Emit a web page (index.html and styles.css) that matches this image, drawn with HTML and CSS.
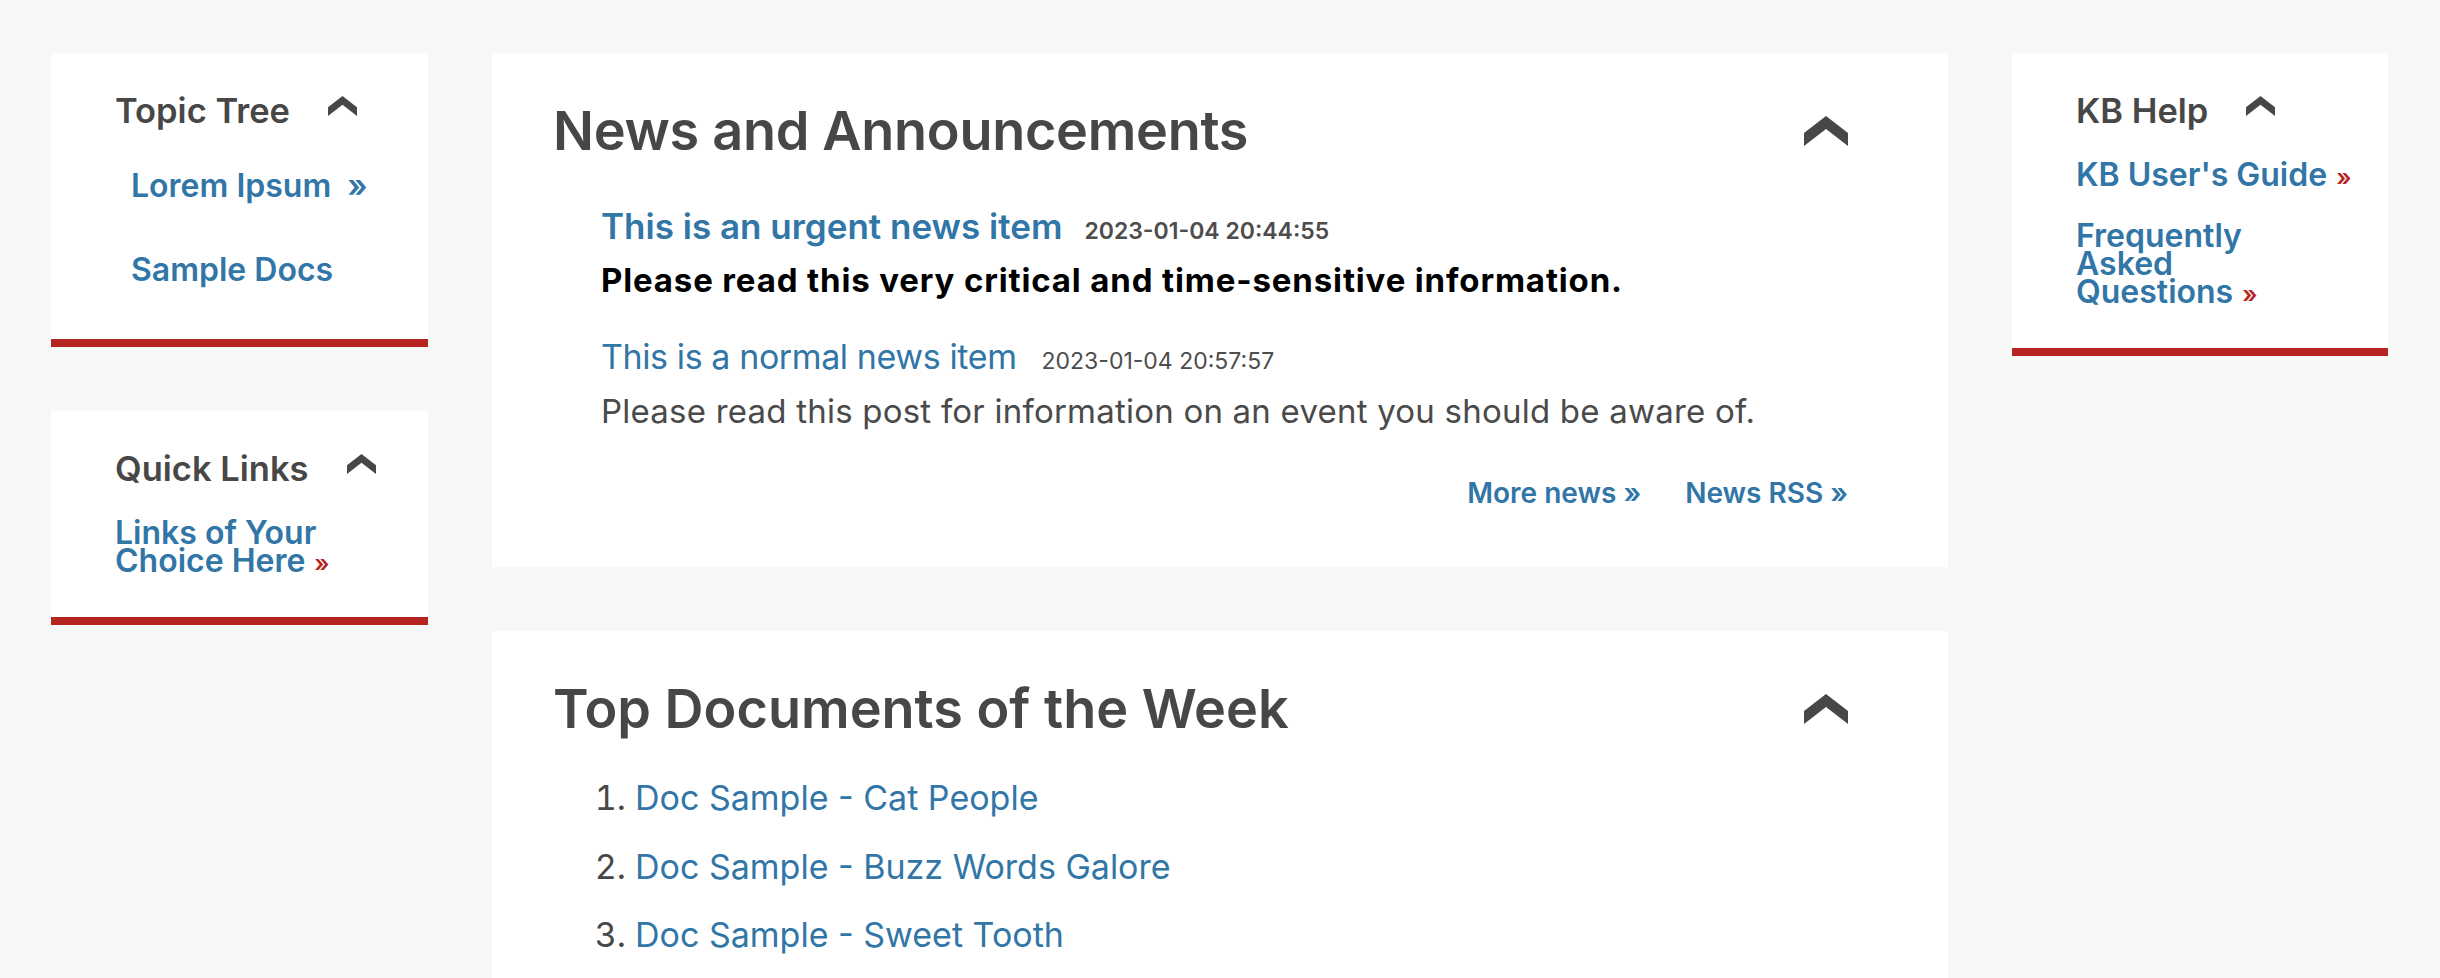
FILE: index.html
```html
<!DOCTYPE html>
<html lang="en">
<head>
<meta charset="utf-8">
<title>Knowledge Base</title>
<link rel="stylesheet" href="styles.css">
</head>
<body>
<div class="page">
  <aside class="col">
    <section class="side-card">
      <div class="side-head">
        <h2 class="side-title">Topic Tree</h2>
        <svg class="chev-sm" viewBox="0 0 44 30"><polygon points="22,0 44,17 44,30 22,13 0,30 0,17"/></svg>
      </div>
      <ul class="side-list tree">
        <li><a href="#">Lorem Ipsum</a><span class="arrow-blue">»</span></li>
        <li><a href="#">Sample Docs</a></li>
      </ul>
    </section>
    <section class="side-card">
      <div class="side-head">
        <h2 class="side-title">Quick Links</h2>
        <svg class="chev-sm" viewBox="0 0 44 30"><polygon points="22,0 44,17 44,30 22,13 0,30 0,17"/></svg>
      </div>
      <ul class="side-list">
        <li><a href="#">Links of Your Choice Here</a><span class="arrow-red">»</span></li>
      </ul>
    </section>
  </aside>

  <main class="col">
    <section class="main-card">
      <div class="main-head">
        <h1 class="main-title">News and Announcements</h1>
        <svg class="chev-lg" viewBox="0 0 44 30"><polygon points="22,0 44,17 44,30 22,13 0,30 0,17"/></svg>
      </div>
      <div class="news">
        <article class="news-item urgent">
          <div class="news-head">
            <a class="news-title" href="#">This is an urgent news item</a>
            <span class="news-date">2023-01-04 20:44:55</span>
          </div>
          <p class="news-body">Please read this very critical and time-sensitive information.</p>
        </article>
        <article class="news-item">
          <div class="news-head">
            <a class="news-title" href="#">This is a normal news item</a>
            <span class="news-date">2023-01-04 20:57:57</span>
          </div>
          <p class="news-body">Please read this post for information on an event you should be aware of.</p>
        </article>
      </div>
      <div class="news-more">
        <a href="#">More news »</a>
        <a href="#">News RSS »</a>
      </div>
    </section>

    <section class="main-card docs-card">
      <div class="main-head">
        <h1 class="main-title">Top Documents of the Week</h1>
        <svg class="chev-lg" viewBox="0 0 44 30"><polygon points="22,0 44,17 44,30 22,13 0,30 0,17"/></svg>
      </div>
      <ol class="docs">
        <li><a href="#">Doc Sample - Cat People</a></li>
        <li><a href="#">Doc Sample - Buzz Words Galore</a></li>
        <li><a href="#">Doc Sample - Sweet Tooth</a></li>
      </ol>
    </section>
  </main>

  <aside class="col">
    <section class="side-card kb-card">
      <div class="side-head">
        <h2 class="side-title">KB Help</h2>
        <svg class="chev-sm" viewBox="0 0 44 30"><polygon points="22,0 44,17 44,30 22,13 0,30 0,17"/></svg>
      </div>
      <ul class="side-list">
        <li class="single-line"><a href="#">KB User's Guide</a><span class="arrow-red">»</span></li>
        <li><a href="#">Frequently Asked Questions</a><span class="arrow-red">»</span></li>
      </ul>
    </section>
  </aside>
</div>
</body>
</html>
```

FILE: styles.css
```css
html, body {
  margin: 0;
  padding: 0;
}

body {
  background: #f7f7f7;
  font-family: Inter, "Noto Sans", "Liberation Sans", sans-serif;
  color: #474747;
}

a {
  color: #3176a7;
  text-decoration: none;
}

.page {
  display: grid;
  grid-template-columns: 377px 1456px 376px;
  column-gap: 64px;
  align-items: start;
  padding: 53px 52px 0 51px;
  height: 978px;
  box-sizing: border-box;
  overflow: hidden;
}

.col {
  display: flex;
  flex-direction: column;
  gap: 64px;
}

/* Sidebar cards */
.side-card {
  background: #fff;
  border-bottom: 8px solid #b5241f;
  padding: 38px 40px 41.6px 64px;
}

.kb-card {
  padding-right: 52px;
}

.side-head {
  display: flex;
  align-items: flex-start;
}

.side-title {
  margin: 0;
  font-size: 34.5px;
  line-height: 40px;
  font-weight: 600;
  color: #474747;
  white-space: nowrap;
}

.chev-sm {
  flex: none;
  width: 29px;
  height: 20px;
  margin: 5px 0 0 38px;
  fill: #474747;
}

.side-list {
  list-style: none;
  margin: 30.4px 0 0;
  padding: 0;
}

.side-list li {
  font-size: 32px;
  line-height: 28px;
  font-weight: 600;
}

.side-list li + li {
  margin-top: 33px;
}

.side-list .single-line {
  white-space: nowrap;
}

.tree {
  margin: 41.4px 0 13px;
  padding-left: 16px;
}

.tree li + li {
  margin-top: 56px;
}

.arrow-blue {
  color: #3176a7;
  margin-left: 16px;
}

.arrow-red {
  color: #b5241f;
  font-size: 24px;
  line-height: 0;
  font-weight: 600;
  margin-left: 9px;
  margin-right: -40px;
}

/* Main cards */
.main-card {
  background: #fff;
  padding: 46px 100px 57px 61px;
}

.main-head {
  display: flex;
  align-items: center;
  justify-content: space-between;
}

.main-title {
  margin: 0;
  font-size: 54px;
  line-height: 64px;
  font-weight: 600;
  letter-spacing: -0.3px;
  color: #474747;
}

.docs-card .main-title {
  letter-spacing: 0;
}

.chev-lg {
  flex: none;
  width: 44px;
  height: 30px;
  fill: #474747;
}

.news {
  margin: 41.6px 0 0 48px;
}

.news-item + .news-item {
  margin-top: 36px;
}

.news-head {
  display: flex;
  align-items: baseline;
  gap: 25px;
}

.news-title {
  font-size: 35px;
  line-height: 42px;
}

.urgent .news-head {
  gap: 22px;
}

.urgent .news-title {
  font-weight: 600;
}

.news-item:not(.urgent) .news-title {
  font-size: 34px;
  letter-spacing: -0.4px;
}

.news-date {
  font-size: 23px;
  color: #4d4d4d;
}

.urgent .news-date {
  font-weight: 600;
}

.news-body {
  margin: 13px 0 0;
  font-size: 33px;
  line-height: 40px;
  letter-spacing: 0.22px;
  color: #4a4a4a;
}

.urgent .news-body {
  font-weight: 700;
  letter-spacing: 0.85px;
  color: #000;
}

.news-more {
  display: flex;
  justify-content: flex-end;
  gap: 44px;
  margin-top: 45.2px;
  font-size: 28px;
  line-height: 34px;
  font-weight: 600;
}

.docs {
  margin: 36.3px 0 0;
  padding-left: 82px;
  font-size: 34px;
  line-height: 42px;
  color: #474747;
}

.docs li {
  margin-bottom: 26.5px;
}
```
